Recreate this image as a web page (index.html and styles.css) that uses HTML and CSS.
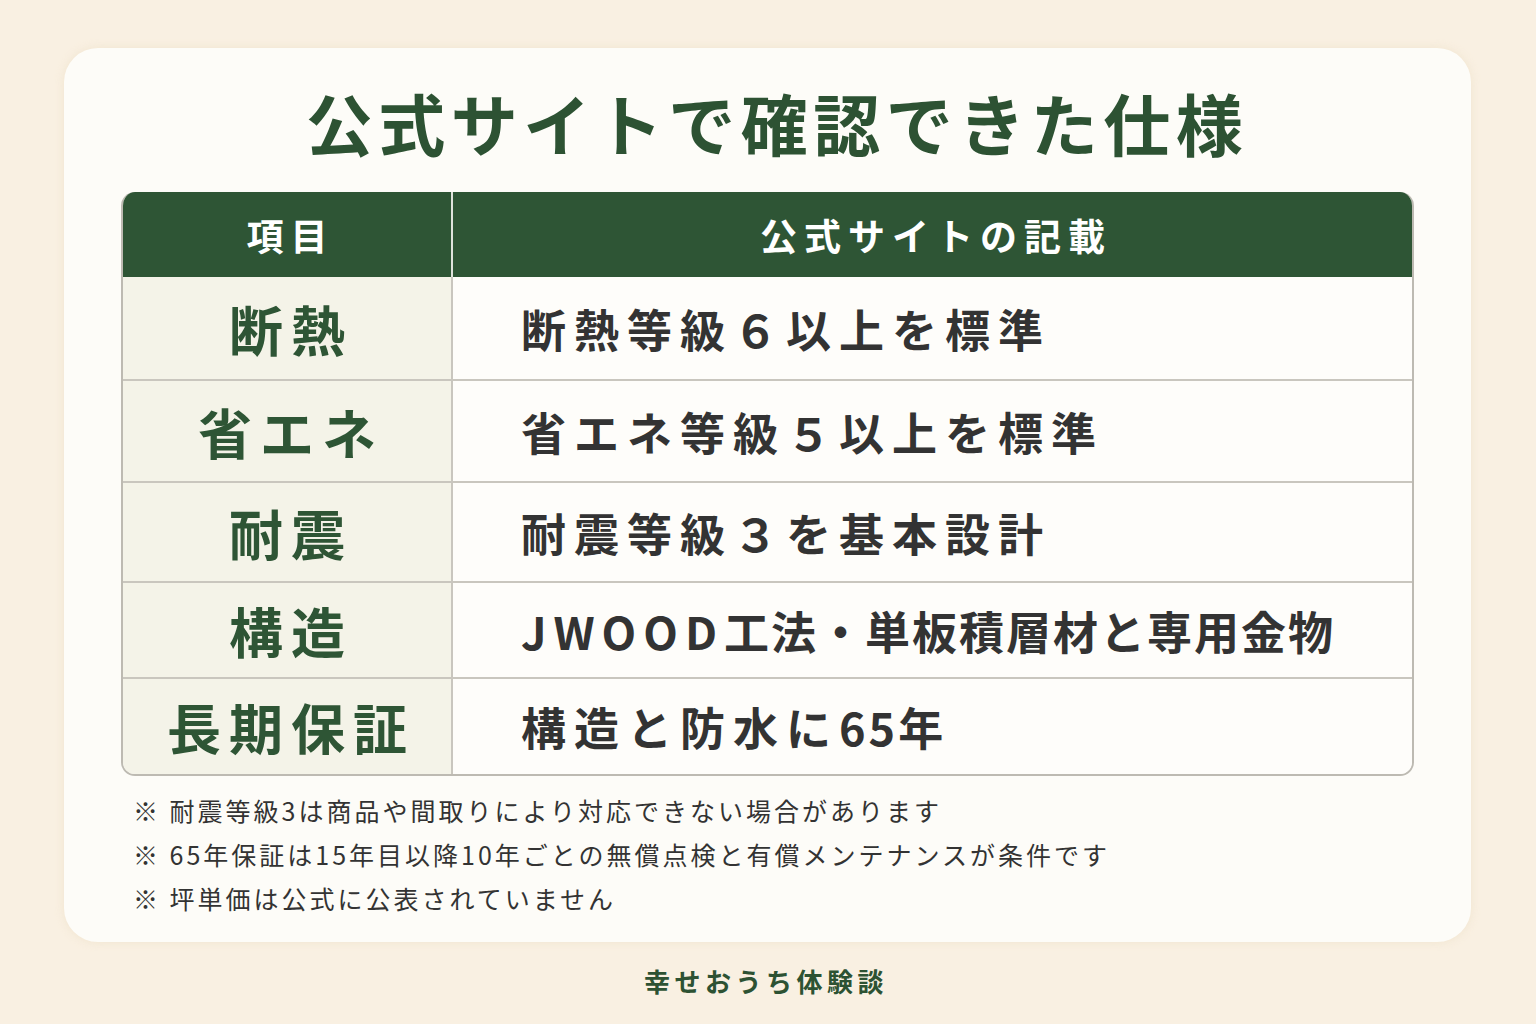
FILE: index.html
```html
<!DOCTYPE html>
<html lang="ja">
<head>
<meta charset="utf-8">
<link rel="stylesheet" href="styles.css">
</head>
<body>
<div class="card">
  <h1 class="title">公式サイトで確認できた仕様</h1>
  <div class="table">
    <div class="th th-left">項目</div>
    <div class="th th-right">公式サイトの記載</div>

    <div class="cell key">断熱</div>
    <div class="cell val">断熱等級６以上を標準</div>

    <div class="cell key">省エネ</div>
    <div class="cell val">省エネ等級５以上を標準</div>

    <div class="cell key">耐震</div>
    <div class="cell val">耐震等級３を基本設計</div>

    <div class="cell key">構造</div>
    <div class="cell val val-tight"><span class="latin">JWOOD</span>工法・単板積層材と専用金物</div>

    <div class="cell key last">長期保証</div>
    <div class="cell val last">構造と防水に<span class="num">65</span>年</div>
  </div>
  <ul class="notes">
    <li>※ 耐震等級3は商品や間取りにより対応できない場合があります</li>
    <li>※ 65年保証は15年目以降10年ごとの無償点検と有償メンテナンスが条件です</li>
    <li>※ 坪単価は公式に公表されていません</li>
  </ul>
</div>
<div class="footer">幸せおうち体験談</div>
</body>
</html>
```
FILE: styles.css
```css
* { box-sizing: border-box; }
html, body {
  margin: 0;
  padding: 0;
}
body {
  width: 1536px;
  height: 1024px;
  background: #f9f0e2;
  font-family: "Noto Sans CJK JP", "Noto Sans", sans-serif;
  overflow: hidden;
}
.card {
  margin: 48px 65px 0 64px;
  height: 894px;
  background: #fdfcf8;
  border-radius: 34px;
  padding: 0 57px;
  box-shadow: 0 0 10px rgba(230, 215, 185, 0.45);
}
.title {
  margin: 0;
  padding-top: 40px;
  height: 144px;
  line-height: 1;
  font-size: 67px;
  font-weight: 700;
  color: #2d5233;
  text-align: center;
  letter-spacing: 5.5px;
  text-indent: 19px;
}
.table {
  display: grid;
  grid-template-columns: 330px 1fr;
  grid-template-rows: 85px 104px 102px 100px 96px 95px;
  border-radius: 14px;
  border: 2px solid #bdbab2;
  border-top: none;
  overflow: hidden;
}
.th {
  background: #2e5535;
  color: #ffffff;
  font-size: 37px;
  font-weight: 700;
  display: flex;
  align-items: center;
  justify-content: center;
  letter-spacing: 7px;
  text-indent: 7px;
}
.th-left {
  border-right: 2px solid #dfe3dc;
}
.cell {
  display: flex;
  align-items: center;
  border-bottom: 2px solid #c9c6be;
  white-space: nowrap;
}
.cell.last { border-bottom: none; }
.key {
  background: #f4f3e8;
  color: #2e5535;
  font-size: 54px;
  font-weight: 700;
  justify-content: center;
  letter-spacing: 8px;
  text-indent: 8px;
  border-right: 2px solid #c9c6be;
}
.val {
  background: #fefdfa;
  color: #333333;
  font-size: 45px;
  font-weight: 700;
  padding-left: 68px;
  letter-spacing: 8px;
}
.val-tight {
  letter-spacing: 2px;
}
.val-tight .latin {
  letter-spacing: 7px;
}
.val .num {
  letter-spacing: 3px;
}
.notes {
  list-style: none;
  margin: 0;
  padding: 12px 0 0 12px;
}
.notes li {
  font-size: 25px;
  line-height: 44px;
  color: #333333;
  letter-spacing: 3px;
}
.footer {
  text-align: center;
  margin-top: 20px;
  font-size: 26px;
  font-weight: 700;
  color: #2d5233;
  letter-spacing: 4.5px;
  padding-right: 4px;
}
```
